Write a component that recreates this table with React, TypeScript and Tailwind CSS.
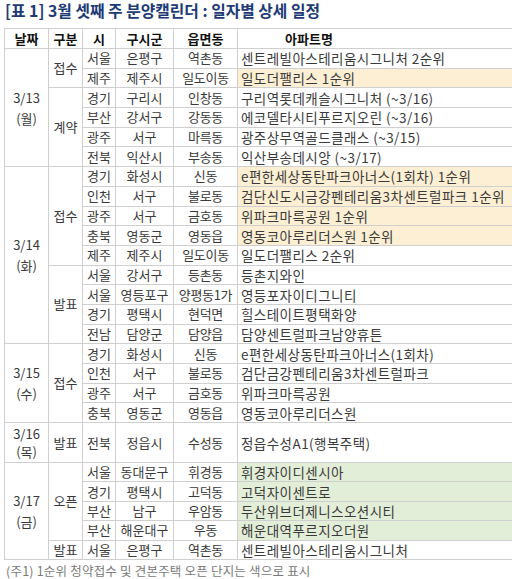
import React from "react";

type Row = { si: string; gu: string; dong: string; apt: string; hl?: "y" | "g" };
type Group = { kind: string; rows: Row[] };
type Day = { date: string; wd: string; groups: Group[]; tall?: boolean };

const days: Day[] = [
  {
    date: "3/13",
    wd: "(월)",
    groups: [
      {
        kind: "접수",
        rows: [
          { si: "서울", gu: "은평구", dong: "역촌동", apt: "센트레빌아스테리움시그니처 2순위" },
          { si: "제주", gu: "제주시", dong: "일도이동", apt: "일도더팰리스 1순위", hl: "y" },
        ],
      },
      {
        kind: "계약",
        rows: [
          { si: "경기", gu: "구리시", dong: "인창동", apt: "구리역롯데캐슬시그니처 (~3/16)" },
          { si: "부산", gu: "강서구", dong: "강동동", apt: "에코델타시티푸르지오린 (~3/16)" },
          { si: "광주", gu: "서구", dong: "마륵동", apt: "광주상무역골드클래스 (~3/15)" },
          { si: "전북", gu: "익산시", dong: "부송동", apt: "익산부송데시앙 (~3/17)" },
        ],
      },
    ],
  },
  {
    date: "3/14",
    wd: "(화)",
    groups: [
      {
        kind: "접수",
        rows: [
          { si: "경기", gu: "화성시", dong: "신동", apt: "e편한세상동탄파크아너스(1회차) 1순위", hl: "y" },
          { si: "인천", gu: "서구", dong: "불로동", apt: "검단신도시금강펜테리움3차센트럴파크 1순위", hl: "y" },
          { si: "광주", gu: "서구", dong: "금호동", apt: "위파크마륵공원 1순위", hl: "y" },
          { si: "충북", gu: "영동군", dong: "영동읍", apt: "영동코아루리더스원 1순위", hl: "y" },
          { si: "제주", gu: "제주시", dong: "일도이동", apt: "일도더팰리스 2순위" },
        ],
      },
      {
        kind: "발표",
        rows: [
          { si: "서울", gu: "강서구", dong: "등촌동", apt: "등촌지와인" },
          { si: "서울", gu: "영등포구", dong: "양평동1가", apt: "영등포자이디그니티" },
          { si: "경기", gu: "평택시", dong: "현덕면", apt: "힐스테이트평택화양" },
          { si: "전남", gu: "담양군", dong: "담양읍", apt: "담양센트럴파크남양휴튼" },
        ],
      },
    ],
  },
  {
    date: "3/15",
    wd: "(수)",
    groups: [
      {
        kind: "접수",
        rows: [
          { si: "경기", gu: "화성시", dong: "신동", apt: "e편한세상동탄파크아너스(1회차)" },
          { si: "인천", gu: "서구", dong: "불로동", apt: "검단금강펜테리움3차센트럴파크" },
          { si: "광주", gu: "서구", dong: "금호동", apt: "위파크마륵공원" },
          { si: "충북", gu: "영동군", dong: "영동읍", apt: "영동코아루리더스원" },
        ],
      },
    ],
  },
  {
    date: "3/16",
    wd: "(목)",
    tall: true,
    groups: [
      {
        kind: "발표",
        rows: [{ si: "전북", gu: "정읍시", dong: "수성동", apt: "정읍수성A1(행복주택)" }],
      },
    ],
  },
  {
    date: "3/17",
    wd: "(금)",
    groups: [
      {
        kind: "오픈",
        rows: [
          { si: "서울", gu: "동대문구", dong: "휘경동", apt: "휘경자이디센시아", hl: "g" },
          { si: "경기", gu: "평택시", dong: "고덕동", apt: "고덕자이센트로", hl: "g" },
          { si: "부산", gu: "남구", dong: "우암동", apt: "두산위브더제니스오션시티", hl: "g" },
          { si: "부산", gu: "해운대구", dong: "우동", apt: "해운대역푸르지오더원", hl: "g" },
        ],
      },
      {
        kind: "발표",
        rows: [{ si: "서울", gu: "은평구", dong: "역촌동", apt: "센트레빌아스테리움시그니처" }],
      },
    ],
  },
];

const font = { fontFamily: '"Noto Sans CJK KR", "Noto Sans", sans-serif' };
const bd = "border border-[#cfcfcf]";

export default function App() {
  const trs: React.ReactNode[] = [];
  days.forEach((d) => {
    const total = d.groups.reduce((s, g) => s + g.rows.length, 0);
    let first = true;
    d.groups.forEach((g, gi) => {
      g.rows.forEach((r, ri) => {
        const h = d.tall ? "h-[40px]" : d.date === "3/17" ? "h-[19.4px]" : "h-[19.7px]";
        const bg = r.hl === "y" ? "bg-[#fcefd3]" : r.hl === "g" ? "bg-[#e3eed9]" : "";
        trs.push(
          <tr key={`${d.date}-${gi}-${ri}`} className={h}>
            {first && (
              <td
                rowSpan={total}
                className={`${bd} text-center align-middle ${d.tall ? "leading-[18px]" : "leading-[21px]"}`}
              >
                <div>{d.date}</div>
                <div>{d.wd}</div>
              </td>
            )}
            {ri === 0 && (
              <td rowSpan={g.rows.length} className={`${bd} text-center align-middle`}>
                {g.kind}
              </td>
            )}
            <td className={`${bd} text-center whitespace-nowrap`}>{r.si}</td>
            <td className={`${bd} text-center whitespace-nowrap`}>{r.gu}</td>
            <td className={`${bd} text-center whitespace-nowrap tracking-[-0.3px]`}>{r.dong}</td>
            <td className={`${bd} border-r-0 pl-[3px] whitespace-nowrap text-[13.5px] tracking-[0.45px] ${bg}`}>
              {r.apt}
            </td>
          </tr>
        );
        first = false;
      });
    });
  });

  return (
    <div className="w-[512px] h-[579px] overflow-hidden bg-white" style={font}>
      <div className="pl-[5px] pt-[1px] h-[28px] text-[15.8px] font-bold text-[#203a76] leading-[20px]">
        [표 1] 3월 셋째 주 분양캘린더 : 일자별 상세 일정
      </div>
      <table className="ml-[4px] border-collapse table-fixed w-[560px] text-[13px] text-[#3a3a3a] leading-[16px]">
        <colgroup>
          <col className="w-[44px]" />
          <col className="w-[34px]" />
          <col className="w-[33px]" />
          <col className="w-[58px]" />
          <col className="w-[64px]" />
          <col className="w-[327px]" />
        </colgroup>
        <thead>
          <tr className="h-[20px] text-[#111]">
            <th className={`${bd} font-bold`}>날짜</th>
            <th className={`${bd} font-bold`}>구분</th>
            <th className={`${bd} font-bold`}>시</th>
            <th className={`${bd} font-bold`}>구시군</th>
            <th className={`${bd} font-bold`}>읍면동</th>
            <th className={`${bd} border-r-0 font-bold text-left pl-[47px]`}>아파트명</th>
          </tr>
        </thead>
        <tbody>{trs}</tbody>
      </table>
      <div className="pl-[6px] pt-[4px] text-[12.5px] text-[#7a7a7a] leading-[14px] tracking-[0.2px]">
        (주1) 1순위 청약접수 및 견본주택 오픈 단지는 색으로 표시
      </div>
    </div>
  );
}
